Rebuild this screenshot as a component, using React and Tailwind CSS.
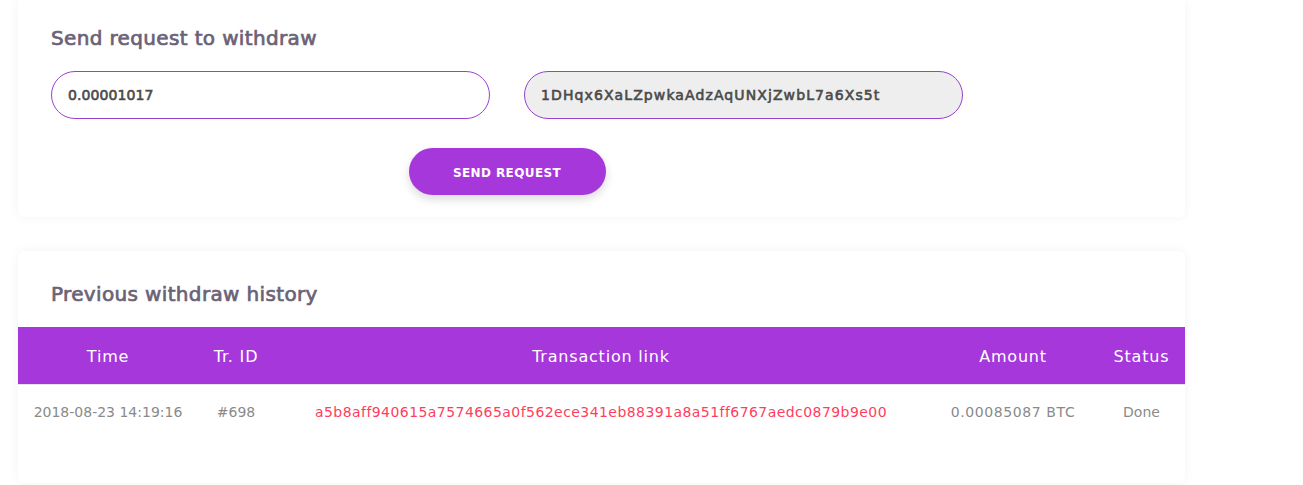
export default function App() {
  const cols = [
    { label: "Time", w: "w-[180px]" },
    { label: "Tr. ID", w: "w-[76px]" },
    { label: "Transaction link", w: "w-[654px]" },
    { label: "Amount", w: "w-[170px]" },
    { label: "Status", w: "w-[87px]" },
  ];

  return (
    <div className="w-[1303px] h-[485px] bg-white overflow-hidden font-['DejaVu_Sans',sans-serif]">
      <div className="w-[1167px] ml-[18px]">
        {/* Withdraw form */}
        <div className="bg-white rounded-b-md shadow-[0_0_12px_rgba(0,0,0,0.05)] pl-[33px] pt-[24px] pb-[22px]">
          <h2 className="text-[20px] leading-[28px] font-normal tracking-[0.35px] text-[#6b6277] [-webkit-text-stroke:0.7px_#6b6277]">
            Send request to withdraw
          </h2>
          <div className="w-[912px] mt-[19px]">
            <div className="grid grid-cols-2 gap-[34px]">
              <input
                type="text"
                defaultValue="0.00001017"
                className="h-[48px] rounded-full border border-[#9b3fd0] bg-white px-4 text-[14px] font-normal tracking-[0.1px] text-[#4a4a4a] [-webkit-text-stroke:0.6px_#4a4a4a] outline-none"
              />
              <input
                type="text"
                readOnly
                defaultValue="1DHqx6XaLZpwkaAdzAqUNXjZwbL7a6Xs5t"
                className="h-[48px] rounded-full border border-[#9b3fd0] bg-[#eeeeee] px-4 text-[14px] font-normal tracking-[1.1px] text-[#4a4a4a] [-webkit-text-stroke:0.6px_#4a4a4a] outline-none"
              />
            </div>
            <div className="flex justify-center mt-[29px]">
              <button className="w-[197px] h-[47px] rounded-full bg-[#a537db] text-white text-[12px] font-bold tracking-[0.4px] pt-[2px] shadow-[0_4px_10px_rgba(0,0,0,0.15)]">
                SEND REQUEST
              </button>
            </div>
          </div>
        </div>

        {/* History */}
        <div className="bg-white rounded-md shadow-[0_0_12px_rgba(0,0,0,0.05)] mt-[34px] pt-[29px] h-[232px]">
          <h2 className="pl-[33px] text-[20px] leading-[28px] font-normal tracking-[0.35px] text-[#6b6277] [-webkit-text-stroke:0.7px_#6b6277]">
            Previous withdraw history
          </h2>
          <table className="w-full mt-[19px] table-fixed border-collapse">
            <thead>
              <tr className="bg-[#a537db] h-[57px] border-b border-[#e5e5e5]">
                {cols.map((c) => (
                  <th
                    key={c.label}
                    className={`${c.w} text-white text-[16px] font-normal tracking-[0.8px] text-center pt-[4px]`}
                  >
                    {c.label}
                  </th>
                ))}
              </tr>
            </thead>
            <tbody>
              <tr className="h-[56px] text-[14px] text-[#8a8a8a] text-center">
                <td>2018-08-23 14:19:16</td>
                <td>#698</td>
                <td className="text-[#ff3d5e] tracking-[0.44px]">
                  a5b8aff940615a7574665a0f562ece341eb88391a8a51ff6767aedc0879b9e00
                </td>
                <td className="tracking-[0.6px]">0.00085087 BTC</td>
                <td>Done</td>
              </tr>
            </tbody>
          </table>
        </div>
      </div>
    </div>
  );
}
